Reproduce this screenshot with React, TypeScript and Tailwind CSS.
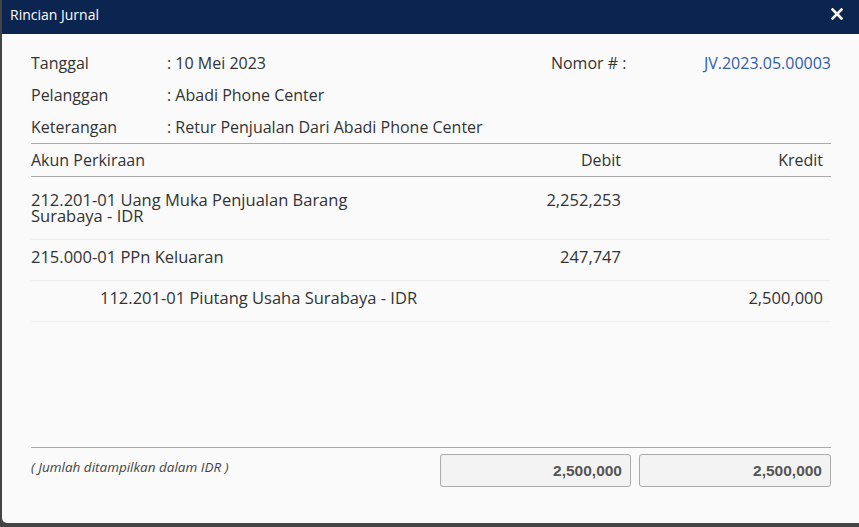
import React from "react";

const rows = [
  { akun: "212.201-01 Uang Muka Penjualan Barang Surabaya - IDR", debit: "2,252,253", kredit: "", indent: false, pt: "pt-[15px]" },
  { akun: "215.000-01 PPn Keluaran", debit: "247,747", kredit: "", indent: false, pt: "pt-[9px]" },
  { akun: "112.201-01 Piutang Usaha Surabaya - IDR", debit: "", kredit: "2,500,000", indent: true, pt: "pt-[9px]" },
];

export default function App() {
  return (
    <div className="w-[859px] h-[527px] bg-[#444] overflow-hidden" style={{ fontFamily: '"Open Sans", sans-serif' }}>
      <div className="ml-[2px] w-[857px] h-[523px] bg-[#fafafa] rounded-bl-[5px] flex flex-col text-[#333]">
        <div className="h-[34px] bg-[#0b2550] flex items-start justify-between pl-[8px] pr-[16px] pt-[5px] shrink-0">
          <span className="text-white text-[14px] leading-[20px]">Rincian Jurnal</span>
          <svg width="12" height="12" viewBox="0 0 12 12" className="mt-[3px]">
            <path d="M1.5 1.5 L10.5 10.5 M10.5 1.5 L1.5 10.5" stroke="#fff" strokeWidth="2.6" strokeLinecap="square" />
          </svg>
        </div>
        <div className="flex-1 flex flex-col pl-[29px] pr-[28px] pt-[13px] text-[16px]">
          <div className="flex">
            <div className="flex-1">
              <div className="h-8 flex items-center"><span className="w-[136px]">Tanggal</span><span>: 10 Mei 2023</span></div>
              <div className="h-8 flex items-center"><span className="w-[136px]">Pelanggan</span><span>: Abadi Phone Center</span></div>
              <div className="h-8 flex items-center"><span className="w-[136px]">Keterangan</span><span>: Retur Penjualan Dari Abadi Phone Center</span></div>
            </div>
            <div className="h-8 flex items-center">
              <span className="w-[153px]">Nomor # :</span>
              <span className="text-[#2e5ea8]">JV.2023.05.00003</span>
            </div>
          </div>
          <div className="border-t border-b border-[#aaa] h-[34px] grid grid-cols-[380px_218px_202px] items-center">
            <span>Akun Perkiraan</span>
            <span className="text-right pr-[8px]">Debit</span>
            <span className="text-right pr-[8px]">Kredit</span>
          </div>
          {rows.map((r, i) => (
            <div key={i} className={`grid grid-cols-[380px_218px_202px] border-b border-[#eee] ${r.pt} pb-[15px] leading-[16px] text-[16.5px]`}>
              <span className={r.indent ? "pl-[69px] whitespace-nowrap" : "pr-[16px]"}>{r.akun}</span>
              <span className="text-right pr-[8px]">{r.debit}</span>
              <span className="text-right pr-[8px]">{r.kredit}</span>
            </div>
          ))}
          <div className="flex-1" />
          <div className="border-t border-[#aaa] flex items-start pt-[6px] pb-[36px]">
            <span className="flex-1 italic text-[13.5px] text-[#444] pt-[3px]">( Jumlah ditampilkan dalam IDR )</span>
            <div className="flex gap-[8px]">
              <div className="w-[191px] h-[33px] border border-[#aaa] rounded-[3px] bg-[#f3f3f3] flex items-center justify-end pr-[8px] font-bold text-[15.5px] text-[#555]" style={{ fontFamily: '"Liberation Sans", Arial, sans-serif' }}>2,500,000</div>
              <div className="w-[192px] h-[33px] border border-[#aaa] rounded-[3px] bg-[#f3f3f3] flex items-center justify-end pr-[8px] font-bold text-[15.5px] text-[#555]" style={{ fontFamily: '"Liberation Sans", Arial, sans-serif' }}>2,500,000</div>
            </div>
          </div>
        </div>
      </div>
    </div>
  );
}
